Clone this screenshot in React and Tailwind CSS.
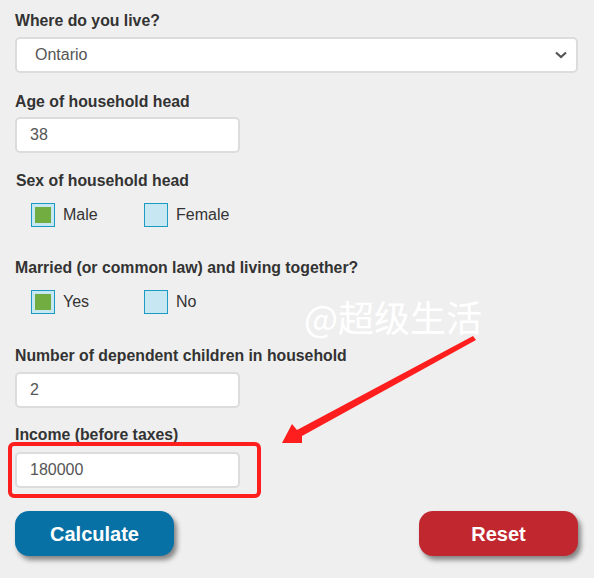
import React from 'react';

const Label = ({ children, className = '' }) => (
    <div className={`text-[15.8px] leading-5 font-bold text-[#333] ${className}`}>{children}</div>
);

const TextBox = ({ value }) => (
    <div className="w-[225px] h-9 bg-white border-2 border-[#dcdcdc] rounded-[5px] flex items-center pl-[13px] text-[16px] text-[#555]">
        {value}
    </div>
);

const Check = ({ label, checked }) => (
    <div className="w-[113px] flex items-center gap-2">
        <div className="w-6 h-6 border-[1.5px] border-[#1b9ac3] bg-[#c7e8f2] flex items-center justify-center">
            {checked && <div className="w-4 h-4 bg-[#72ad42]" />}
        </div>
        <span className="text-[16px] text-[#333]">{label}</span>
    </div>
);

export default function App() {
    return (
        <div className="relative w-[594px] h-[578px] bg-[#efefef] overflow-hidden pl-[15px] pr-4 pt-[11px] font-['Liberation_Sans',Arial,sans-serif]">
            <Label>Where do you live?</Label>
            <div className="mt-[6px] h-9 bg-white border-2 border-[#dcdcdc] rounded-[5px] flex items-center justify-between pl-[18px] pr-[8px] text-[16px] text-[#555]">
                <span>Ontario</span>
                <svg width="14" height="10" viewBox="0 0 14 10" fill="none">
                    <path d="M2 2.5 L7 7 L12 2.5" stroke="#555" strokeWidth="2.2" />
                </svg>
            </div>

            <Label className="mt-[19px]">Age of household head</Label>
            <div className="mt-[5px]"><TextBox value="38" /></div>

            <Label className="mt-[18px] ml-px">Sex of household head</Label>
            <div className="mt-[12px] ml-4 flex">
                <Check label="Male" checked />
                <Check label="Female" />
            </div>

            <Label className="mt-[31px]">Married (or common law) and living together?</Label>
            <div className="mt-[12px] ml-4 flex">
                <Check label="Yes" checked />
                <Check label="No" />
            </div>

            <Label className="mt-[32px]">Number of dependent children in household</Label>
            <div className="mt-[6px]"><TextBox value="2" /></div>

            <Label className="mt-[17px]">Income (before taxes)</Label>
            <div className="mt-[7px] relative w-[225px]">
                <TextBox value="180000" />
                <div className="absolute left-[-7px] top-[-10px] w-[253px] h-[56px] border-4 border-[#ff1e1e] rounded-md" />
            </div>

            <div className="mt-[23px] flex justify-between">
                <button className="w-[159px] h-[45px] rounded-[14px] bg-[#0771a6] text-white text-[20px] font-bold shadow-[3px_4px_5px_rgba(0,0,0,0.45)]">
                    Calculate
                </button>
                <button className="w-[159px] h-[45px] rounded-[14px] bg-[#c1272e] text-white text-[20px] font-bold shadow-[3px_4px_5px_rgba(0,0,0,0.45)]">
                    Reset
                </button>
            </div>

            <div className="absolute left-[304px] top-[294px] text-[36px] leading-[44px] text-white font-['Noto_Sans_CJK_SC',sans-serif]">
                @超级生活
            </div>

            <svg className="absolute left-0 top-0 pointer-events-none" width="594" height="578">
                <polygon points="473,336 476,340 302,436 302,443 282,443 292,424 297,430" fill="#ff1e1e" />
            </svg>
        </div>
    );
}
